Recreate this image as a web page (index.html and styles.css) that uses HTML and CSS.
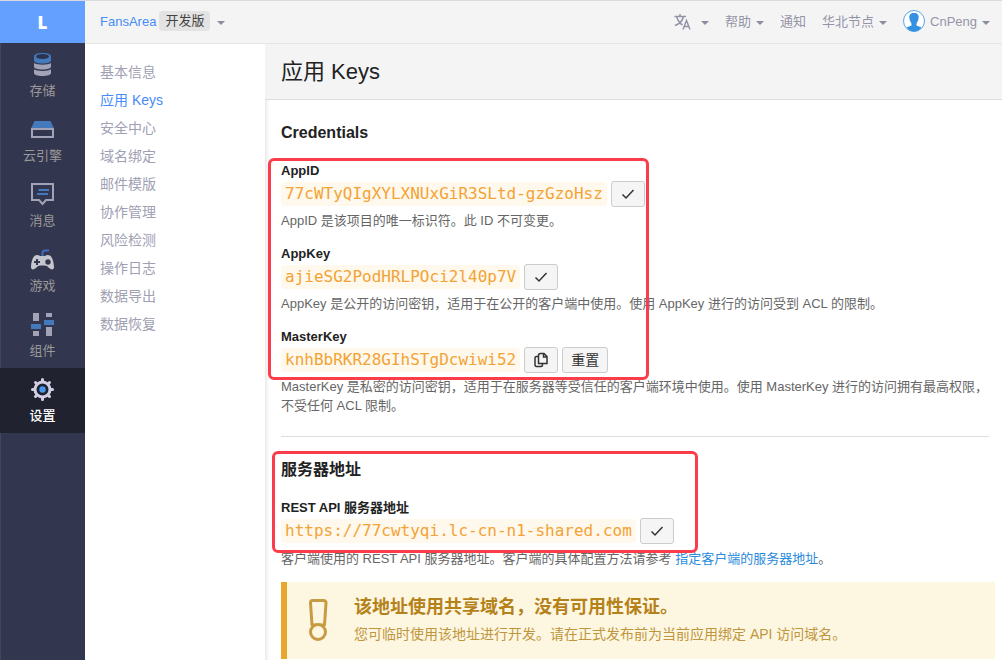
FILE: index.html
```html
<!DOCTYPE html>
<html lang="zh-CN">
<head>
<meta charset="utf-8">
<title>应用 Keys</title>
<link rel="stylesheet" href="styles.css">
</head>
<body>
<div class="app">
  <nav class="rail">
    <a class="logo" href="#">L</a>
    <a class="rail-item" href="#">
      <svg class="rail-icon" viewBox="0 0 24 24"><path fill="#4479bb" d="M3 4.500C3 2.500 6 1 11.500 1S20 2.500 20 4.500V8.500C20 10.500 16.500 11.500 11.500 11.500S3 10.500 3 8.500Z"/><ellipse cx="11.500" cy="4.500" rx="6.500" ry="2.500" fill="#2b3350"/><path fill="#a3a3b7" d="M3 11C6 13.300 17 13.300 20 11V14.500C20 16.500 16.500 17.500 11.500 17.500S3 16.500 3 14.500ZM3 17.300C6 19.500 17 19.500 20 17.300V21C20 23 16.500 24 11.500 24S3 23 3 21Z"/></svg>
      <span>存储</span>
    </a>
    <a class="rail-item" href="#">
      <svg class="rail-icon" viewBox="0 0 24 24"><path fill="#4479bb" d="M3.500 4H19.500L23 11.500H0Z"/><rect x="1" y="12" width="21" height="8" fill="none" stroke="#a3a3b7" stroke-width="2"/></svg>
      <span>云引擎</span>
    </a>
    <a class="rail-item" href="#">
      <svg class="rail-icon" viewBox="0 0 24 24" fill="none" stroke-width="2"><path stroke="#a3a3b7" d="M1 2H22V18H15L11.500 22L8 18H1Z"/><path stroke="#4479bb" d="M7.500 8H18M6 12H17"/></svg>
      <span>消息</span>
    </a>
    <a class="rail-item" href="#">
      <svg class="rail-icon" viewBox="0 0 24 24"><path fill="none" stroke="#416fc2" stroke-width="2" d="M11.500 9V6Q11.500 3.500 14 3.500H18"/><path fill="#c6c6ce" d="M4 8.500Q7 7.500 9 9H14Q16 7.500 19 8.500C21.500 10 23 16 23 20.500C22.500 23.500 19.500 22.500 17.500 20.500C16 18.500 14 18.500 11.500 18.500S7 18.500 5.500 20.500C3.500 22.500 .500 23.500 0 20.500C0 16 1.500 10 4 8.500Z"/><path stroke="#33364f" stroke-width="2" d="M3 15H9M6 12V18"/><circle cx="17" cy="15" r="2.700" fill="#33364f"/></svg>
      <span>游戏</span>
    </a>
    <a class="rail-item" href="#">
      <svg class="rail-icon" viewBox="0 0 24 24"><path fill="#a3a3b7" d="M2 1H8V9H2ZM2 19H8V24H2ZM15 1H21V5H15ZM15 15H21V24H15Z"/><path fill="#4479bb" d="M0 12H10V17H0ZM13 8H23V13H13Z"/></svg>
      <span>组件</span>
    </a>
    <a class="rail-item active" href="#">
      <svg class="rail-icon" viewBox="0 0 24 24"><g fill="none" stroke="#d2cfe4"><circle cx="11.500" cy="12.500" r="7.500" stroke-width="3"/><path stroke-width="3" stroke-linecap="round" d="M11.500 2.500V4M11.500 21V22.500M1.500 12.500H3M20 12.500H21.500M4.500 5.500L5.500 6.500M17.500 18.500L18.500 19.500M4.500 19.500L5.500 18.500M17.500 6.500L18.500 5.500"/></g><circle cx="11.500" cy="12.500" r="3.200" fill="#4696f0"/></svg>
      <span>设置</span>
    </a>
  </nav>
  <div class="workspace">
    <header class="topbar">
      <button class="menu app-switch"><span class="app-name">FansArea</span><span class="plan">开发版</span><span class="caret"></span></button>
      <div class="tools">
        <button class="menu language" aria-label="语言"><svg class="lang-icon" viewBox="0 0 18 18" fill="none" stroke="#9494a8" stroke-width="1.500"><path d="M.500 3.500H12M6 1V3.500M2.500 3.500C4 8 6 10.500 8.500 12M9.500 3.500C8.500 8 5 11 1 12.500M9 16.500L12.500 7.500L16 16.500M10.500 13.500H14.500"/></svg><span class="caret"></span></button>
        <button class="menu">帮助<span class="caret"></span></button>
        <button class="menu">通知</button>
        <button class="menu">华北节点<span class="caret"></span></button>
        <button class="menu"><svg class="avatar" viewBox="0 0 22 22"><circle cx="11" cy="11" r="10.500" fill="#fff" stroke="#5ba6e8"/><path fill="#3490e2" d="M11 3C14.500 3 16 5 15.600 8C15.400 11 14 12 13.500 13.500V15.500C15 16.500 17 16.500 18.500 17.500Q15.500 21.500 11 21.500T3.500 17.500C5 16.500 7 16.500 8.500 15.500V13.500C8 12 6.600 11 6.400 8C6 5 7.500 3 11 3Z"/></svg>CnPeng<span class="caret"></span></button>
      </div>
    </header>
    <div class="columns">
      <nav class="submenu">
        <a href="#">基本信息</a>
        <a class="current" href="#">应用 Keys</a>
        <a href="#">安全中心</a>
        <a href="#">域名绑定</a>
        <a href="#">邮件模版</a>
        <a href="#">协作管理</a>
        <a href="#">风险检测</a>
        <a href="#">操作日志</a>
        <a href="#">数据导出</a>
        <a href="#">数据恢复</a>
      </nav>
      <main class="page">
        <h1 class="page-title">应用 Keys</h1>
        <div class="content">
          <section class="credentials">
            <h2>Credentials</h2>
            <div class="marked keys-area">
              <div class="key">
                <h3>AppID</h3>
                <div class="key-row"><code>77cWTyQIgXYLXNUxGiR3SLtd-gzGzoHsz</code><button class="btn" aria-label="已复制"><svg class="btn-icon" viewBox="0 0 16 16"><path d="M2.500 8.500L6 12L13.500 4"/></svg></button></div>
                <p>AppID 是该项目的唯一标识符。此 ID 不可变更。</p>
              </div>
              <div class="key">
                <h3>AppKey</h3>
                <div class="key-row"><code>ajieSG2PodHRLPOci2l40p7V</code><button class="btn" aria-label="已复制"><svg class="btn-icon" viewBox="0 0 16 16"><path d="M2.500 8.500L6 12L13.500 4"/></svg></button></div>
                <p>AppKey 是公开的访问密钥，适用于在公开的客户端中使用。使用 AppKey 进行的访问受到 ACL 的限制。</p>
              </div>
              <div class="key">
                <h3>MasterKey</h3>
                <div class="key-row"><code>knhBbRKR28GIhSTgDcwiwi52</code><button class="btn" aria-label="复制"><svg class="btn-icon" viewBox="0 0 16 16"><path d="M7.500 1.500H11L14 4.500V11.500H5.500V3.500Q5.500 1.500 7.500 1.500ZM10.500 1.500V5H14M5.500 4.500H3.500Q2 4.500 2 6V13Q2 14.500 3.500 14.500H8Q9.500 14.500 9.500 13V11.500"/></svg></button><button class="btn">重置</button></div>
                <p>MasterKey 是私密的访问密钥，适用于在服务器等受信任的客户端环境中使用。使用 MasterKey 进行的访问拥有最高权限，不受任何 ACL 限制。</p>
              </div>
            </div>
          </section>
          <section class="server">
            <div class="marked server-area">
              <h2>服务器地址</h2>
              <div class="key">
                <h3>REST API 服务器地址</h3>
                <div class="key-row"><code>https://77cwtyqi.lc-cn-n1-shared.com</code><button class="btn" aria-label="已复制"><svg class="btn-icon" viewBox="0 0 16 16"><path d="M2.500 8.500L6 12L13.500 4"/></svg></button></div>
                <p>客户端使用的 REST API 服务器地址。客户端的具体配置方法请参考 <a href="#">指定客户端的服务器地址</a>。</p>
              </div>
            </div>
          </section>
          <div class="alert" role="alert">
            <svg class="alert-icon" viewBox="0 0 20 44" fill="none" stroke="#c79b43" stroke-width="3"><path stroke-linejoin="round" d="M4.500 2.500H15.500Q18 2.500 18 5L16.500 27H4L2.500 5Q2.500 2.500 4.500 2.500Z"/><circle cx="10" cy="34" r="7.500" fill="#fdf7e2"/></svg>
            <div>
              <strong>该地址使用共享域名，没有可用性保证。</strong>
              <p>您可临时使用该地址进行开发。请在正式发布前为当前应用绑定 API 访问域名。</p>
            </div>
          </div>
        </div>
      </main>
    </div>
  </div>
</div>
</body>
</html>
```
FILE: styles.css
```css
*, ::after { box-sizing: border-box; }
body {
  margin: 0;
  font: 13px/19px "Liberation Sans", "Noto Sans CJK SC", sans-serif;
  color: #222;
  background: #fff;
}
h1, h2, h3, p { margin: 0; }
a { text-decoration: none; color: #2a8bdc; }
button { font: inherit; margin: 0; }

.app {
  display: grid;
  grid-template-columns: 85px 1fr;
  min-height: 100vh;
  border-top: 1px solid #d9d9e0;
}
.rail { background: #33364f; box-shadow: inset 1px 0 #43465d; }
.logo {
  display: flex;
  align-items: center;
  justify-content: center;
  height: 42px;
  background: #64a0ff;
  color: #fff;
  font-family: "Open Sans", sans-serif;
  font-size: 17px;
  font-weight: 800;
}
.rail-item {
  display: flex;
  flex-direction: column;
  align-items: center;
  gap: 5px;
  height: 65px;
  padding-top: 9px;
  color: #999;
}
.rail-item.active { background: #20222f; color: #fff; font-weight: 500; }
.rail-icon { width: 24px; height: 24px; }

.workspace { display: flex; flex-direction: column; min-width: 0; }
.topbar {
  display: flex;
  justify-content: space-between;
  align-items: center;
  height: 43px;
  padding: 0 12px 2px 15px;
  background: #f4f4f4;
  border-bottom: 1px solid #e6e6e6;
}
.menu {
  display: flex;
  align-items: center;
  gap: 5px;
  padding: 0;
  border: 0;
  background: none;
  color: #9494a8;
}
.tools { display: flex; align-items: center; gap: 16px; }
.app-switch { gap: 3px; }
.app-name { color: #478bf7; }
.plan {
  padding: 0 6px;
  border-radius: 4px;
  background: #e3e3e3;
  color: #444;
  line-height: 20px;
}
.caret {
  border: 4px solid transparent;
  border-top-color: #8c8ca0;
  border-bottom: 0;
  margin-top: 3px;
}
.app-switch .caret { margin-left: 4px; }
.lang-icon { width: 18px; height: 18px; margin: 2px 4px 0 0; }
.avatar { width: 22px; height: 22px; }

.columns { display: grid; grid-template-columns: 180px 1fr; flex: 1; }
.submenu { padding: 14px 15px; }
.submenu a { display: block; color: #a0a0b3; font-size: 14px; line-height: 28px; }
.submenu .current { color: #478bf7; }
.page { min-width: 0; box-shadow: inset 5px 0 5px -4px #dedede; }
.page-title {
  padding: 13px 16px 12px;
  background: #f4f4f4;
  border-bottom: 1px solid #ddd;
  font-size: 22px;
  font-weight: 400;
  line-height: 30px;
}
.content { padding: 21px 7px 0 16px; }
.credentials, .server { margin-right: 6px; }
.credentials { padding-bottom: 21px; border-bottom: 1px solid #ddd; }
.server { padding-top: 21px; }
h2 { margin-bottom: 16px; font-size: 16px; line-height: 24px; }
h3 { font-size: 13px; line-height: 19px; }
.server h2, .server h3 { font-weight: 600; }
.key + .key { margin-top: 14px; }
.key-row { display: flex; align-items: center; gap: 4px; height: 28px; margin-bottom: 3px; }
.server .key-row { margin-bottom: 4px; }
.key p { color: #666; }
code {
  padding: 0 4px;
  border-radius: 4px;
  background: #fff8ec;
  color: #f3a334;
  font: 16px/24px "DejaVu Sans Mono", monospace;
}
.btn {
  display: flex;
  align-items: center;
  justify-content: center;
  height: 26px;
  padding: 0 8px;
  border: 1px solid #ccc;
  border-radius: 3px;
  background: #f5f5f5;
  color: #333;
  font-size: 14px;
}
.btn-icon { width: 16px; height: 16px; fill: none; stroke: #333; stroke-width: 1.5; }

.marked { position: relative; }
.marked::after {
  content: "";
  position: absolute;
  border: 3px solid #fb3d4b;
  border-radius: 6px;
  pointer-events: none;
}
.keys-area::after { left: -13px; top: -3px; width: 381px; height: 222px; }
.server-area::after { left: -9px; top: -7px; width: 426px; height: 102px; }

.alert {
  display: flex;
  gap: 26px;
  margin-top: 14px;
  padding: 12px 22px 12px 21px;
  border-left: 6px solid #e7a62c;
  background: #fdf7e2;
  color: #c0953c;
}
.alert-icon { width: 20px; height: 44px; margin-top: 4px; }
.alert strong { display: block; color: #b58219; font-size: 18px; line-height: 27px; }
.alert p { font-size: 14px; line-height: 26px; }
```
